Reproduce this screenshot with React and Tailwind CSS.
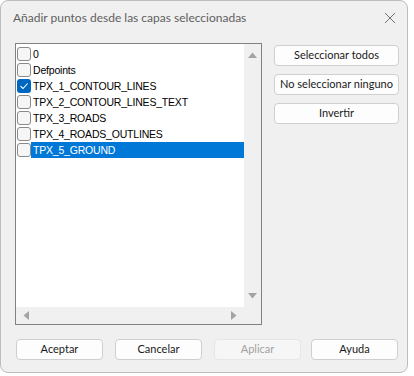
import React from "react";

const items = [
  { label: "0", checked: false },
  { label: "Defpoints", checked: false },
  { label: "TPX_1_CONTOUR_LINES", checked: true },
  { label: "TPX_2_CONTOUR_LINES_TEXT", checked: false },
  { label: "TPX_3_ROADS", checked: false },
  { label: "TPX_4_ROADS_OUTLINES", checked: false },
  { label: "TPX_5_GROUND", checked: false, selected: true },
];

function Check({ checked }) {
  if (checked) {
    return (
      <div className="w-[14px] h-[14px] rounded-[3px] bg-[#0067c0] flex items-center justify-center shrink-0">
        <svg width="10" height="10" viewBox="0 0 10 10">
          <path d="M1.5 5.2 L4 7.5 L8.6 2.5" fill="none" stroke="white" strokeWidth="1.1" />
        </svg>
      </div>
    );
  }
  return <div className="w-[14px] h-[14px] rounded-[3px] border border-[#8a8a8a] bg-[#f6f6f6] shrink-0" />;
}

function Btn({ children, disabled }) {
  return (
    <div
      className={
        "h-[21px] flex items-center justify-center rounded-[4px] border text-[11px] whitespace-nowrap " +
        (disabled
          ? "border-[#e6e6e6] bg-[#f6f6f6] text-[#a0a0a0]"
          : "border-[#cfcfcf] bg-[#fdfdfd] text-[#1a1a1a]")
      }
    >
      {children}
    </div>
  );
}

export default function App() {
  return (
    <div className="w-[414px] h-[376px] bg-white" style={{ fontFamily: "Lato, 'Noto Sans', sans-serif" }}>
      <div className="w-[408px] h-[373px] bg-[#f0f0f0] border border-[#bdbdbd] rounded-[8px] flex flex-col">
        <div className="h-[34px] flex items-center justify-between pl-[12px] pr-[11px]">
          <span className="text-[12px] text-[#606060]">Añadir puntos desde las capas seleccionadas</span>
          <svg width="12" height="12" viewBox="0 0 12 12">
            <path d="M1 1 L11 11 M11 1 L1 11" stroke="#707070" strokeWidth="1" />
          </svg>
        </div>
        <div className="flex pl-[14px] pt-[8px] gap-[12px]">
          <div className="w-[247px] h-[282px] border border-[#828282] bg-white flex flex-col">
            <div className="flex flex-1">
              <div className="flex-1 pt-[2px] pl-[1px]" style={{ fontFamily: "'Liberation Sans', Arial, sans-serif" }}>
                {items.map((it) => (
                  <div key={it.label} className="h-[16px] flex items-center">
                    <Check checked={it.checked} />
                    <div
                      className={
                        "flex-1 h-[16px] flex items-center pl-[2px] text-[10.5px] tracking-[-0.2px] leading-none " +
                        (it.selected ? "bg-[#0078d7] text-white" : "text-black")
                      }
                    >
                      {it.label}
                    </div>
                  </div>
                ))}
              </div>
              <div className="w-[17px] bg-[#f0f0f0] flex flex-col items-center justify-between py-[8px]">
                <svg width="9" height="6" viewBox="0 0 9 6"><path d="M0 6 L4.5 0.5 L9 6 Z" fill="#a3a3a3" /></svg>
                <svg width="9" height="6" viewBox="0 0 9 6"><path d="M0 0 L4.5 5.5 L9 0 Z" fill="#a3a3a3" /></svg>
              </div>
            </div>
            <div className="h-[17px] flex">
              <div className="flex-1 bg-[#f0f0f0] flex items-center justify-between px-[7px]">
                <svg width="6" height="9" viewBox="0 0 6 9"><path d="M6 0 L0.5 4.5 L6 9 Z" fill="#a3a3a3" /></svg>
                <svg width="6" height="9" viewBox="0 0 6 9"><path d="M0 0 L5.5 4.5 L0 9 Z" fill="#a3a3a3" /></svg>
              </div>
              <div className="w-[17px] bg-[#f0f0f0]" />
            </div>
          </div>
          <div className="w-[125px] flex flex-col gap-[8px] pt-[2px]">
            <Btn>Seleccionar todos</Btn>
            <Btn>No seleccionar ninguno</Btn>
            <Btn>Invertir</Btn>
          </div>
        </div>
        <div className="flex pl-[15px] pt-[14px]">
          <div className="w-[87px]"><Btn>Aceptar</Btn></div>
          <div className="w-[87px] ml-[12px]"><Btn>Cancelar</Btn></div>
          <div className="w-[87px] ml-[12px]"><Btn disabled>Aplicar</Btn></div>
          <div className="w-[87px] ml-[10px]"><Btn>Ayuda</Btn></div>
        </div>
      </div>
    </div>
  );
}
